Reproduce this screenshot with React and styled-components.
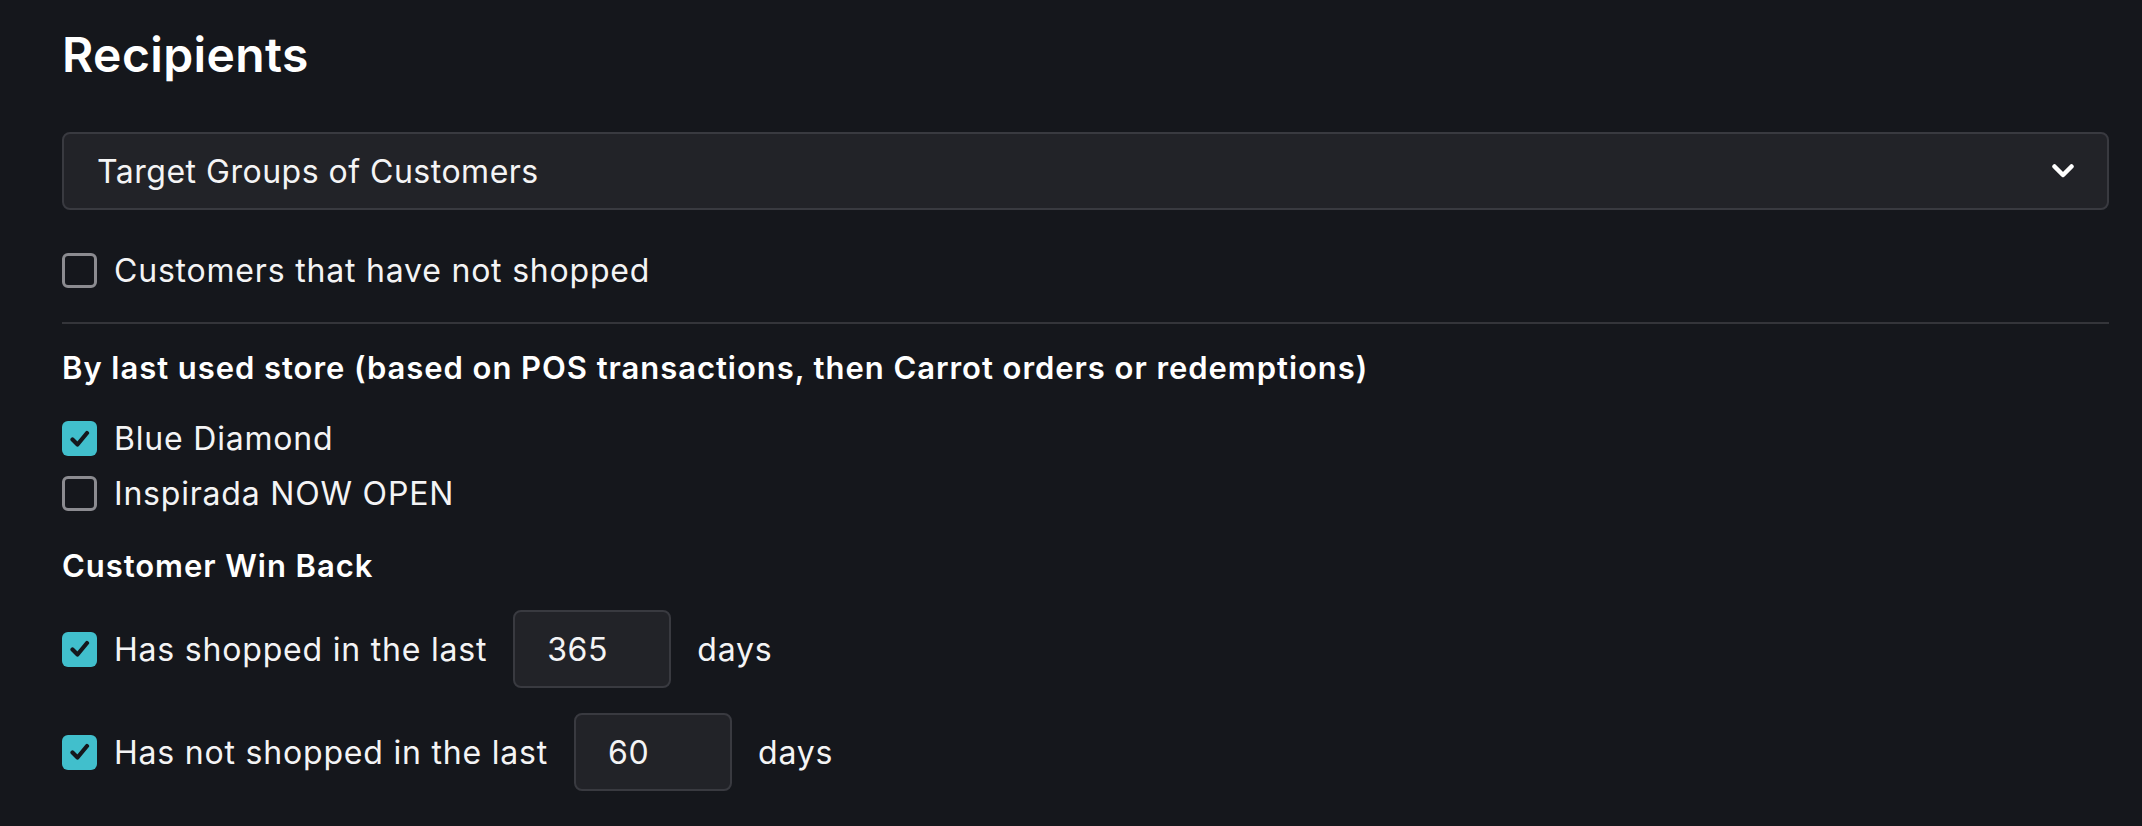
import React from "react";
import styled, { createGlobalStyle } from "styled-components";

const Global = createGlobalStyle`
  html, body { margin: 0; padding: 0; background: #15171c; }
  body { font-family: Inter, "Noto Sans", sans-serif; color: #f4f4f5; }
  * { box-sizing: border-box; }
`;

const Page = styled.div`
  display: flex;
  flex-direction: column;
  padding: 27px 33px 0 62px;
  height: 826px;
`;

const Title = styled.h2`
  margin: 0;
  font-size: 48px;
  line-height: 56px;
  font-weight: 600;
  letter-spacing: 0.4px;
  color: #ffffff;
`;

const Select = styled.div`
  margin-top: 49px;
  height: 78px;
  display: flex;
  align-items: center;
  justify-content: space-between;
  padding: 0 33px 0 33px;
  background: #222328;
  border: 2px solid #393a40;
  border-radius: 8px;
  font-size: 32px;
  letter-spacing: 0.5px;
  color: #f4f4f5;
`;

const Row = styled.label`
  display: flex;
  align-items: center;
  gap: 17px;
  margin-top: ${(p) => p.$mt}px;
  height: ${(p) => p.$h || 35}px;
  font-size: 32px;
  letter-spacing: 0.8px;
  color: #f4f4f5;
`;

const Box = styled.span`
  flex: none;
  width: 35px;
  height: 35px;
  border-radius: 6px;
  display: flex;
  align-items: center;
  justify-content: center;
  border: ${(p) => (p.$checked ? "none" : "3px solid #8b8b90")};
  background: ${(p) => (p.$checked ? "#41bfcc" : "transparent")};
`;

const Divider = styled.hr`
  margin: 34px 0 0;
  border: none;
  height: 2px;
  background: #34353a;
`;

const Heading = styled.h3`
  margin: ${(p) => p.$mt}px 0 0;
  font-size: 31px;
  line-height: 40px;
  font-weight: 600;
  letter-spacing: 0.95px;
  color: #ffffff;
`;

const NumberInput = styled.input`
  width: 158px;
  height: 78px;
  padding: 0 0 0 32px;
  background: #222328;
  border: 2px solid #393a40;
  border-radius: 8px;
  color: #f4f4f5;
  font-family: inherit;
  font-size: 32px;
  letter-spacing: 0.5px;
  outline: none;
  margin: 0 9px;
`;

const Check = ({ checked }) => (
  <Box $checked={checked}>
    {checked && (
      <svg width="20" height="18" viewBox="0 0 20 18">
        <polyline
          points="2.5,9.5 7.5,14.5 17,3"
          fill="none"
          stroke="#15171c"
          strokeWidth="4.2"
          strokeLinecap="round"
          strokeLinejoin="round"
        />
      </svg>
    )}
  </Box>
);

export default function App() {
  return (
    <>
      <Global />
      <Page>
        <Title>Recipients</Title>
        <Select>
          <span>Target Groups of Customers</span>
          <svg width="22" height="14" viewBox="0 0 22 14">
            <polyline
              points="2.5,2.5 11,11 19.5,2.5"
              fill="none"
              stroke="#ffffff"
              strokeWidth="4.5"
              strokeLinecap="round"
              strokeLinejoin="round"
            />
          </svg>
        </Select>
        <Row $mt={43}>
          <Check checked={false} />
          Customers that have not shopped
        </Row>
        <Divider />
        <Heading $mt={24}>
          By last used store (based on POS transactions, then Carrot orders or redemptions)
        </Heading>
        <Row $mt={33}>
          <Check checked />
          Blue Diamond
        </Row>
        <Row $mt={20}>
          <Check checked={false} />
          Inspirada NOW OPEN
        </Row>
        <Heading $mt={35}>Customer Win Back</Heading>
        <Row $mt={24} $h={78}>
          <Check checked />
          Has shopped in the last
          <NumberInput defaultValue="365" readOnly />
          days
        </Row>
        <Row $mt={25} $h={78}>
          <Check checked />
          Has not shopped in the last
          <NumberInput defaultValue="60" readOnly />
          days
        </Row>
      </Page>
    </>
  );
}
